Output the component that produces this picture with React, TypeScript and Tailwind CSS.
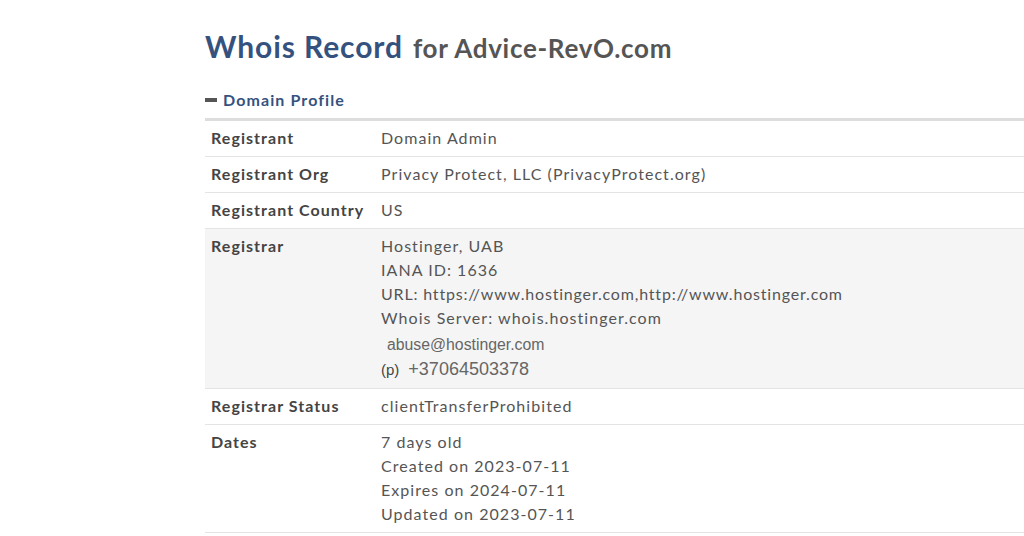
import React from "react";

interface Row {
  label: string;
  lines: React.ReactNode[];
  shaded?: boolean;
}

const rows: Row[] = [
  { label: "Registrant", lines: ["Domain Admin"] },
  { label: "Registrant Org", lines: ["Privacy Protect, LLC (PrivacyProtect.org)"] },
  { label: "Registrant Country", lines: ["US"] },
  {
    label: "Registrar",
    shaded: true,
    lines: [
      "Hostinger, UAB",
      "IANA ID: 1636",
      <span className="tracking-[0.82px]">URL: https://www.hostinger.com,http://www.hostinger.com</span>,
      "Whois Server: whois.hostinger.com",
    ],
  },
  { label: "Registrar Status", lines: ["clientTransferProhibited"] },
  {
    label: "Dates",
    lines: ["7 days old", "Created on 2023-07-11", "Expires on 2024-07-11", "Updated on 2023-07-11"],
  },
];

const App: React.FC = () => {
  return (
    <div className="w-[1024px] h-[536px] overflow-hidden bg-white font-['Lato',sans-serif]">
      <div className="pl-[205px] pt-[26px]">
        <h1 className="leading-[40px] whitespace-nowrap">
          <span className="text-[30px] font-bold text-[#35527f] tracking-[0.9px]">Whois Record</span>
          <span className="text-[26px] font-bold text-[#555555] ml-[10px] tracking-[0.7px]">for Advice-RevO.com</span>
        </h1>

        <div className="mt-[15px] flex items-center h-[26px] text-[16px] font-bold text-[#35527f] tracking-[1.1px]">
          <span className="inline-block w-[12px] h-[4px] bg-[#555555] mr-[6px]" />
          Domain Profile
        </div>

        <div className="mt-[5px] w-[840px] border-t-[3px] border-[#dddddd] text-[16px] tracking-[1.05px]">
          {rows.map((row) => (
            <div
              key={row.label}
              className={`flex border-b border-[#e4e4e4] pt-[5px] pb-[6px] leading-[24px] ${row.shaded ? "bg-[#f5f5f5]" : ""}`}
            >
              <div className="w-[176px] pl-[6px] font-bold text-[#444444] shrink-0">{row.label}</div>
              <div className="text-[#555555]">
                {row.lines.map((l, i) => (
                  <div key={i} className="whitespace-nowrap">
                    {l}
                  </div>
                ))}
                {row.shaded && (
                  <div className="font-['Liberation_Sans',Arial,sans-serif] tracking-normal text-[#666666] mt-[3px]">
                    <div className="text-[15.8px] leading-[24px] pl-[6px]">abuse@hostinger.com</div>
                    <div className="leading-[24px] flex items-baseline">
                      <span className="text-[15px] text-[#444444]">(p)</span>
                      <span className="text-[18px] ml-[9px]">+37064503378</span>
                    </div>
                  </div>
                )}
              </div>
            </div>
          ))}
        </div>
      </div>
    </div>
  );
};

export default App;
